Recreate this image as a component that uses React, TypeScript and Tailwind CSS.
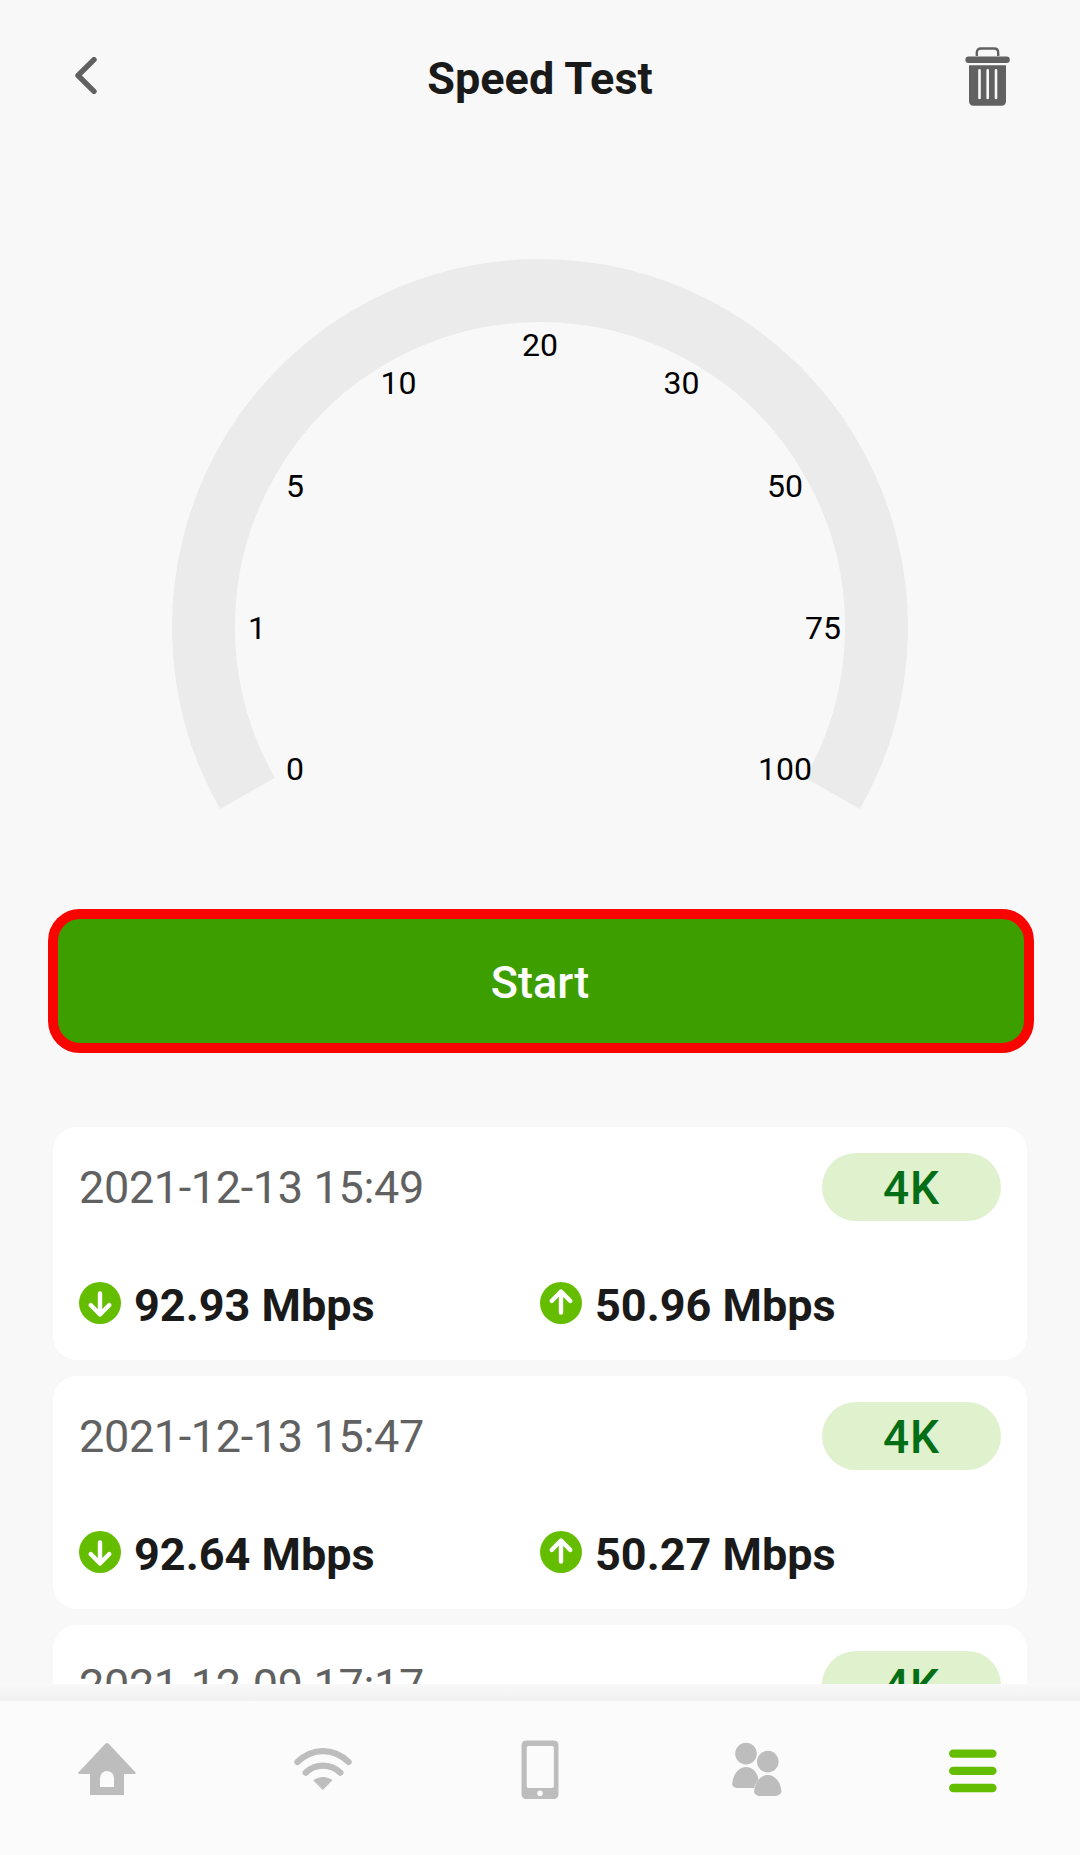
const TICKS = ['0', '1', '5', '10', '20', '30', '50', '75', '100'];

const RESULTS = [
  { date: '2021-12-13 15:49', down: '92.93 Mbps', up: '50.96 Mbps', quality: '4K' },
  { date: '2021-12-13 15:47', down: '92.64 Mbps', up: '50.27 Mbps', quality: '4K' },
  { date: '2021-12-09 17:17', down: '92.71 Mbps', up: '50.43 Mbps', quality: '4K' },
];

const LABEL_RADIUS = 283;

function BackIcon() {
  return (
    <svg width="22" height="37" viewBox="0 0 22 37" fill="none">
      <path
        d="M19 2.7 L3 18.5 L19 34.3"
        stroke="#616161"
        strokeWidth="5.4"
        strokeLinecap="round"
        strokeLinejoin="round"
      />
    </svg>
  );
}

function TrashIcon() {
  return (
    <svg width="45" height="59" viewBox="0 0 45 59" fill="#616161">
      <path
        d="M11.8 9 V5.5 Q11.8 1.5 16 1.5 H29 Q33.2 1.5 33.2 5.5 V9"
        fill="none"
        stroke="#616161"
        strokeWidth="2.4"
      />
      <rect x="0.4" y="9.6" width="44.4" height="6.4" rx="3.2" />
      <path
        fillRule="evenodd"
        d="M4 18.2 H41 V54 Q41 58.8 36.2 58.8 H8.8 Q4 58.8 4 54 Z
           M14.5 22 A1.3 1.3 0 0 0 13.2 23.3 V51 A1.3 1.3 0 0 0 15.8 51 V23.3 A1.3 1.3 0 0 0 14.5 22 Z
           M22.7 22 A1.3 1.3 0 0 0 21.4 23.3 V51 A1.3 1.3 0 0 0 24 51 V23.3 A1.3 1.3 0 0 0 22.7 22 Z
           M31 22 A1.3 1.3 0 0 0 29.7 23.3 V51 A1.3 1.3 0 0 0 32.3 51 V23.3 A1.3 1.3 0 0 0 31 22 Z"
      />
    </svg>
  );
}

function Gauge() {
  return (
    <svg width="738" height="556" viewBox="-369 -369 738 556">
      <path
        d="M-292.5 166.4 A336.5 336.5 0 1 1 292.5 166.4"
        fill="none"
        stroke="#ebebeb"
        strokeWidth="63"
      />
      {TICKS.map((label, i) => {
        // 240 degree sweep, one label every 30 degrees
        const angle = ((150 + i * 30) * Math.PI) / 180;
        return (
          <text
            key={label}
            x={Math.cos(angle) * LABEL_RADIUS}
            y={Math.sin(angle) * LABEL_RADIUS + 11.6}
            textAnchor="middle"
            className="fill-black text-[32px]"
          >
            {label}
          </text>
        );
      })}
    </svg>
  );
}

function ArrowBadge({ up = false }: { up?: boolean }) {
  return (
    <svg width="42" height="42" viewBox="0 0 42 42" fill="none">
      <circle cx="21" cy="21" r="21" fill="#65bd00" />
      <path
        d={up ? 'M21 30.5 V10 M11.7 19 L21 9.5 L30.3 19' : 'M21 11.5 V32 M11.7 23 L21 32.5 L30.3 23'}
        stroke="#fff"
        strokeWidth="4.4"
        strokeLinecap="round"
        strokeLinejoin="round"
      />
    </svg>
  );
}

function ResultCard({ date, down, up, quality }: (typeof RESULTS)[number]) {
  return (
    <div className="h-[233px] shrink-0 rounded-[24px] bg-white pt-[26px] pr-[26px] pl-[26px]">
      <div className="flex h-[68px] items-center justify-between">
        <span className="pt-[2px] text-[45px] leading-[54px] tracking-[-0.35px] text-[#616161]">{date}</span>
        <span className="flex h-[68px] w-[179px] items-center justify-center rounded-full bg-[#e0f1cd] pt-[2px] text-[46px] leading-[54px] font-medium tracking-[1px] text-[#046e17]">
          {quality}
        </span>
      </div>
      <div className="mt-[55px] grid grid-cols-2 text-[45px] leading-[54px] font-bold text-[#1a1a1a]">
        <div className="flex items-center gap-[13px]">
          <ArrowBadge />
          <span className="pt-[5px] leading-[49px]">{down}</span>
        </div>
        <div className="flex items-center gap-[13px]">
          <ArrowBadge up />
          <span className="pt-[5px] leading-[49px]">{up}</span>
        </div>
      </div>
    </div>
  );
}

function HomeIcon() {
  return (
    <svg width="58" height="60" viewBox="0 0 58 60" fill="#bdbdbd">
      <path
        fillRule="evenodd"
        d="M27.6 3.6 Q29 2.4 30.4 3.6 L57.4 32.2 Q58.3 34 56.5 34 H46 V55 H12 V34 H1.5 Q-0.3 34 0.6 32.2 Z
           M22 47 H36 V38 A7 7 0 0 0 22 38 Z"
      />
    </svg>
  );
}

function WifiIcon() {
  return (
    <svg width="58" height="60" viewBox="0 0 58 60" fill="none" stroke="#bdbdbd" strokeWidth="6.2" strokeLinecap="round">
      <path d="M3.4 22 Q15 11.2 29 11.2 T54.6 22" />
      <path d="M11.6 32.7 Q19 25.6 29 25.6 T46.4 32.7" />
      <path
        d="M20 40.2 Q29 34.6 38 40.2 L29 49.3 Z"
        fill="#bdbdbd"
        strokeWidth="1"
        strokeLinejoin="round"
      />
    </svg>
  );
}

function PhoneIcon() {
  return (
    <svg width="38" height="60" viewBox="0 0 38 60" fill="#bdbdbd">
      <path
        fillRule="evenodd"
        d="M5.5 0.5 H32.5 Q37.5 0.5 37.5 5.5 V54 Q37.5 59 32.5 59 H5.5 Q0.5 59 0.5 54 V5.5 Q0.5 0.5 5.5 0.5 Z
           M7.5 6 Q5.7 6 5.7 7.8 V46.2 Q5.7 48 7.5 48 H31 Q32.8 48 32.8 46.2 V7.8 Q32.8 6 31 6 Z
           M19 50.4 A2.8 2.8 0 1 0 19 56 A2.8 2.8 0 1 0 19 50.4 Z"
      />
    </svg>
  );
}

function PeopleIcon() {
  return (
    <svg width="50" height="60" viewBox="0 0 50 60" fill="#bdbdbd">
      <circle cx="14" cy="13.6" r="10.8" />
      <circle cx="35.8" cy="21.6" r="10.8" />
      <path d="M14 27 C20.5 27 25.4 32.5 26.6 39.2 C24 42.5 22.5 46 22.3 48 H5 Q0 47 0.2 44 C1 34.5 6.5 27 14 27 Z" />
      <path d="M35.8 35 C43 35 48.8 42 49.6 52 Q48.5 54.8 44.5 56 H27 Q23 55 22 52 C22.8 42 28.6 35 35.8 35 Z" />
    </svg>
  );
}

function MenuIcon() {
  return (
    <svg width="48" height="60" viewBox="0 0 48 60" fill="#65bd00">
      <rect x="0" y="9.4" width="47.6" height="8.4" rx="4.2" />
      <rect x="0" y="26.7" width="47.6" height="8.4" rx="4.2" />
      <rect x="0" y="43.8" width="47.6" height="8.4" rx="4.2" />
    </svg>
  );
}

export default function App() {
  return (
    <div className="flex h-[1855px] w-[1080px] flex-col overflow-hidden bg-[#f8f8f8] font-['Roboto',sans-serif]">
      <header className="flex h-[157px] shrink-0 items-center justify-between px-[70px]">
        <button type="button" aria-label="Back" className="flex w-[45px] pb-[6px] pl-[5px]">
          <BackIcon />
        </button>
        <h1 className="text-[45px] leading-[54px] font-bold text-[#1a1a1a]">Speed Test</h1>
        <button type="button" aria-label="Delete history" className="pb-[4px]">
          <TrashIcon />
        </button>
      </header>

      <main className="flex h-[1527px] shrink-0 flex-col overflow-hidden">
        <div className="flex h-[752px] shrink-0 justify-center pt-[101px]">
          <Gauge />
        </div>

        <button
          type="button"
          className="mr-[46px] ml-[48px] h-[144px] shrink-0 rounded-[32px] border-[10px] border-[#f90500] bg-[#3d9e00] pt-[3px] pr-[2px] text-[45px] font-medium text-white"
        >
          Start
        </button>

        <div className="mt-[74px] flex flex-col gap-4 px-[53px]">
          {RESULTS.map((result) => (
            <ResultCard key={result.date} {...result} />
          ))}
        </div>
      </main>

      <div className="h-[17px] shrink-0 bg-linear-to-b from-[#f9f9f9] to-[#f1f1f1]" />

      <nav className="grid h-[154px] shrink-0 grid-cols-5 bg-[#fbfbfb] pt-[39px]">
        <a href="#home" aria-label="Home" className="flex justify-center pr-[2px]">
          <HomeIcon />
        </a>
        <a href="#wifi" aria-label="Wi-Fi" className="flex justify-center pr-[2px]">
          <WifiIcon />
        </a>
        <a href="#devices" aria-label="Devices" className="flex justify-center pr-[1px]">
          <PhoneIcon />
        </a>
        <a href="#family" aria-label="Family" className="flex justify-center pl-[2px]">
          <PeopleIcon />
        </a>
        <a href="#menu" aria-label="Menu" className="flex justify-center pl-[2px]">
          <MenuIcon />
        </a>
      </nav>
    </div>
  );
}
